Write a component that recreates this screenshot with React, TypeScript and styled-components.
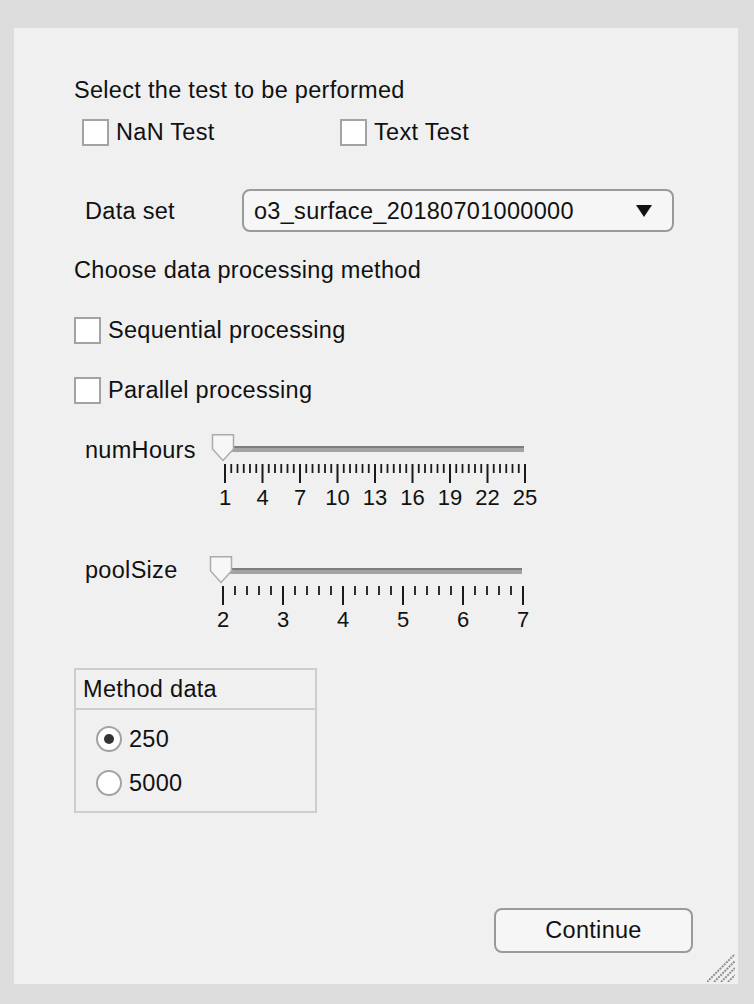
import styled, { createGlobalStyle } from "styled-components";

const GlobalStyle = createGlobalStyle`
  html, body {
    margin: 0;
    padding: 0;
    background: #dcdcdc;
  }
  body {
    font-family: "Liberation Sans", Arial, Helvetica, sans-serif;
    color: #111;
  }
`;

const Page = styled.div`
  padding: 28px 16px 20px 14px;
`;

const Panel = styled.div`
  position: relative;
  box-sizing: border-box;
  width: 724px;
  height: 956px;
  background: #f0f0f0;
  display: flex;
  flex-direction: column;
  padding: 0 45px 31px 60px;
  font-size: 23.5px;
  letter-spacing: 0.3px;
`;

const Row = styled.div<{ $top: number; $h?: number }>`
  display: flex;
  align-items: center;
  margin-top: ${(p) => p.$top}px;
  height: ${(p) => p.$h ?? 28}px;
  line-height: 28px;
  white-space: nowrap;
`;

const TopRow = styled.div<{ $top: number }>`
  display: flex;
  align-items: flex-start;
  margin-top: ${(p) => p.$top}px;
  white-space: nowrap;
`;

const Heading = styled.span``;

const CheckItem = styled.label<{ $width?: number; $indent?: number }>`
  display: flex;
  align-items: center;
  gap: 7px;
  margin-left: ${(p) => p.$indent ?? 0}px;
  width: ${(p) => (p.$width ? `${p.$width}px` : "auto")};
`;

const Box = styled.span`
  box-sizing: border-box;
  width: 27px;
  height: 27px;
  background: #ffffff;
  border: 2px solid #a3a3a3;
`;

const FieldLabel = styled.span<{ $width: number; $top?: number }>`
  box-sizing: border-box;
  width: ${(p) => p.$width}px;
  padding-left: 11px;
  margin-top: ${(p) => p.$top ?? 0}px;
  line-height: 28px;
`;

const Dropdown = styled.div`
  box-sizing: border-box;
  width: 432px;
  height: 43px;
  display: flex;
  align-items: center;
  justify-content: space-between;
  padding: 0 20px 0 10px;
  background: #f6f6f6;
  border: 2px solid #9a9a9a;
  border-radius: 8px;
`;

const SliderWrap = styled.div`
  display: flex;
  flex-direction: column;
`;

const TickLabels = styled.div`
  position: relative;
  height: 22px;
  margin-top: 3px;
  font-size: 22px;
  letter-spacing: 0;
  line-height: 22px;
`;

const TickLabel = styled.span`
  position: absolute;
  top: 0;
  transform: translateX(-50%);
`;

const GroupBox = styled.div`
  box-sizing: border-box;
  width: 243px;
  border: 2px solid #cdcdcd;
`;

const GroupTitle = styled.div`
  height: 38px;
  line-height: 38px;
  padding-left: 7px;
  border-bottom: 2px solid #cdcdcd;
`;

const GroupBody = styled.div`
  display: flex;
  flex-direction: column;
  gap: 18px;
  padding: 16px 0 15px 20px;
`;

const RadioItem = styled.label`
  display: flex;
  align-items: center;
  gap: 7px;
  height: 26px;
  line-height: 26px;
`;

const RadioCircle = styled.span<{ $on?: boolean }>`
  box-sizing: border-box;
  width: 26px;
  height: 26px;
  border-radius: 50%;
  background: #ffffff;
  border: 2px solid #a3a3a3;
  display: flex;
  align-items: center;
  justify-content: center;
  &::after {
    content: "";
    display: ${(p) => (p.$on ? "block" : "none")};
    width: 10px;
    height: 10px;
    border-radius: 50%;
    background: #333333;
  }
`;

const Footer = styled.div`
  margin-top: auto;
  display: flex;
  justify-content: flex-end;
`;

const Button = styled.button`
  box-sizing: border-box;
  width: 199px;
  height: 45px;
  background: #f6f6f6;
  border: 2px solid #9a9a9a;
  border-radius: 8px;
  font: inherit;
  letter-spacing: inherit;
  color: #111;
`;

const Grip = styled.svg`
  position: absolute;
  right: 3px;
  bottom: 2px;
`;

type SliderProps = { min: number; max: number; step: number; major: number; x0: number };

function Slider({ min, max, step, major, x0 }: SliderProps) {
  const span = 300;
  const count = Math.round((max - min) / step);
  const perMajor = Math.round(major / step);
  const px = (v: number) => x0 + ((v - min) / (max - min)) * span;
  const ticks = Array.from({ length: count + 1 }, (_, i) => i);
  const labels: number[] = [];
  for (let v = min; v <= max + 1e-9; v += major) labels.push(Math.round(v));
  const c = x0 - 2;
  return (
    <SliderWrap>
      <svg width={340} height={50}>
        <rect x={c} y={12} width={x0 + 299 - c} height={2} fill="#7d7d7d" />
        <rect x={c} y={14} width={x0 + 299 - c} height={4} fill="#a3a3a3" />
        <polygon
          points={`${c - 10.5},0.75 ${c + 10.5},0.75 ${c + 10.5},15 ${c},26.5 ${c - 10.5},15`}
          fill="#f7f7f7"
          stroke="#ababab"
          strokeWidth={1.5}
        />
        {ticks.map((i) => {
          const isMajor = i % perMajor === 0;
          const x = x0 + (i / count) * span;
          return (
            <line
              key={i}
              x1={x}
              x2={x}
              y1={30}
              y2={isMajor ? 49 : 39}
              stroke="#1a1a1a"
              strokeWidth={isMajor ? 2 : 1.8}
            />
          );
        })}
      </svg>
      <TickLabels>
        {labels.map((v) => (
          <TickLabel key={v} style={{ left: px(v) }}>
            {v}
          </TickLabel>
        ))}
      </TickLabels>
    </SliderWrap>
  );
}

export default function App() {
  return (
    <>
      <GlobalStyle />
      <Page>
        <Panel>
          <Row $top={48}>
            <Heading>Select the test to be performed</Heading>
          </Row>
          <Row $top={14}>
            <CheckItem $indent={8} $width={258}>
              <Box />
              NaN Test
            </CheckItem>
            <CheckItem>
              <Box />
              Text Test
            </CheckItem>
          </Row>
          <Row $top={43} $h={43}>
            <FieldLabel $width={168}>Data set</FieldLabel>
            <Dropdown>
              <span>o3_surface_20180701000000</span>
              <svg width={16} height={12} viewBox="0 0 16 12">
                <polygon points="0,0 16,0 8,12" fill="#111" />
              </svg>
            </Dropdown>
          </Row>
          <Row $top={24}>
            <Heading>Choose data processing method</Heading>
          </Row>
          <Row $top={32}>
            <CheckItem>
              <Box />
              Sequential processing
            </CheckItem>
          </Row>
          <Row $top={32}>
            <CheckItem>
              <Box />
              Parallel processing
            </CheckItem>
          </Row>
          <TopRow $top={30}>
            <FieldLabel $width={126} $top={2}>numHours</FieldLabel>
            <Slider min={1} max={25} step={0.5} major={3} x0={25} />
          </TopRow>
          <TopRow $top={47}>
            <FieldLabel $width={126} $top={0}>poolSize</FieldLabel>
            <Slider min={2} max={7} step={0.2} major={1} x0={23} />
          </TopRow>
          <TopRow $top={37}>
            <GroupBox>
              <GroupTitle>Method data</GroupTitle>
              <GroupBody>
                <RadioItem>
                  <RadioCircle $on />
                  250
                </RadioItem>
                <RadioItem>
                  <RadioCircle />
                  5000
                </RadioItem>
              </GroupBody>
            </GroupBox>
          </TopRow>
          <Footer>
            <Button>Continue</Button>
          </Footer>
          <Grip width={28} height={28} viewBox="0 0 28 28">
            {[0, 7, 14, 21].map((o) => (
              <line
                key={o}
                x1={o}
                y1={28}
                x2={28}
                y2={o}
                stroke="#8f8f8f"
                strokeWidth={2}
                strokeDasharray="2 1"
              />
            ))}
          </Grip>
        </Panel>
      </Page>
    </>
  );
}
